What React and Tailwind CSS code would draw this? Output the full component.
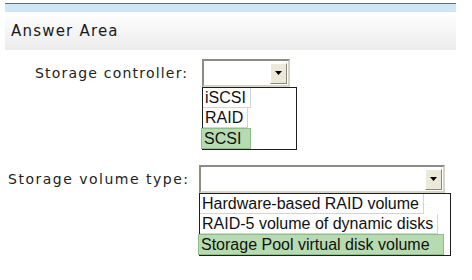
import React from 'react';

const Arrow = () => (
  <div className="w-[17px] h-[21px] bg-[#ece9d8] border border-t-white border-l-white border-r-[#8a877c] border-b-[#8a877c] flex items-center justify-center">
    <svg width="7" height="4" viewBox="0 0 7 4">
      <polygon points="0,0 7,0 3.5,4" fill="#000" />
    </svg>
  </div>
);

const Select = ({ width }) => (
  <div
    className="h-[28px] bg-white border-2 border-t-[#8c8c84] border-l-[#8c8c84] border-r-[#d8d4c8] border-b-[#d8d4c8] flex items-center justify-end pr-[1px]"
    style={{ width }}
  >
    <Arrow />
  </div>
);

const Option = ({ label, selected, width }) => (
  <div
    className={
      selected
        ? 'h-[21px] bg-[#b6dbb0] border border-[#8fbf88] pl-[2px] pr-[4px] flex items-center -ml-[2px]'
        : 'h-[20px] bg-white border-r border-b border-[#d4d4d4] pl-[2px] pr-[4px] flex items-center'
    }
    style={width ? { width } : undefined}
  >
    {label}
  </div>
);

const List = ({ width, items }) => (
  <div
    className="border border-[#1e1e1e] bg-white flex flex-col items-start text-[16px] leading-none text-[#111]"
    style={{ width, fontFamily: '"Liberation Sans", Arial, sans-serif' }}
  >
    {items.map((it) => (
      <Option key={it.label} label={it.label} selected={it.selected} width={it.width} />
    ))}
  </div>
);

export default function App() {
  return (
    <div className="w-[472px] h-[280px] bg-white overflow-hidden" style={{ fontFamily: '"DejaVu Sans", Verdana, sans-serif' }}>
      {/* Header */}
      <div className="mx-[5px] mt-[3px] w-[451px] border-t border-[#5d6f7d]">
        <div className="h-[8px] bg-[#cfe6f7]" />
        <div className="h-[38px] bg-gradient-to-b from-white to-[#ececec] flex items-center pl-[6px] text-[15px] tracking-[1.2px] text-[#1a1a1a]">
          Answer Area
        </div>
      </div>

      {/* Storage controller */}
      <div className="flex items-start pl-[35px] mt-[9px]">
        <div className="h-[28px] flex items-center text-[14px] tracking-[1.2px] text-[#222] w-[167px]">Storage controller:</div>
        <div className="flex flex-col">
          <Select width="88px" />
          <List
            width="95px"
            items={[
              { label: 'iSCSI' },
              { label: 'RAID' },
              { label: 'SCSI', selected: true, width: '50px' },
            ]}
          />
        </div>
      </div>

      {/* Storage volume type */}
      <div className="flex items-start pl-[8px] mt-[15px]">
        <div className="h-[28px] flex items-center text-[14px] tracking-[1.5px] text-[#222] w-[191px]">Storage volume type:</div>
        <div className="flex flex-col">
          <Select width="246px" />
          <List
            width="252px"
            items={[
              { label: 'Hardware-based RAID volume' },
              { label: 'RAID-5 volume of dynamic disks' },
              { label: 'Storage Pool virtual disk volume', selected: true, width: '246px' },
            ]}
          />
        </div>
      </div>
    </div>
  );
}
